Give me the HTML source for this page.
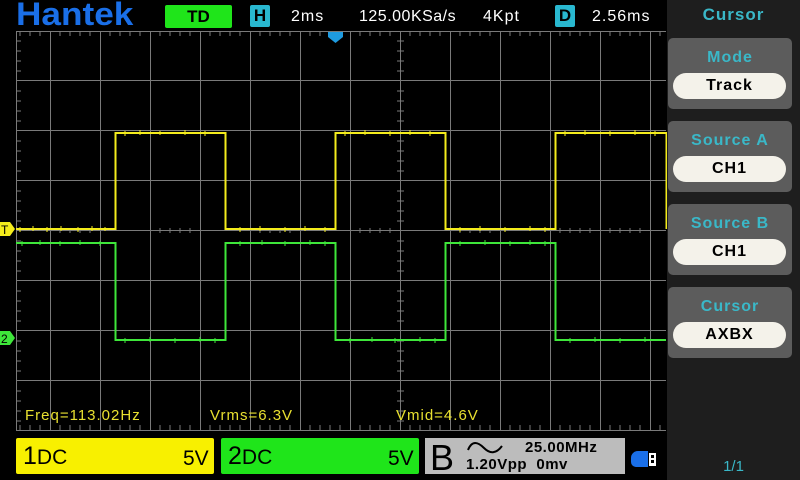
<!DOCTYPE html>
<html><head><meta charset="utf-8"><style>
body{margin:0;width:800px;height:480px;background:#000;overflow:hidden;font-family:"Liberation Sans",sans-serif}
</style></head><body>
<svg width="800" height="480" xmlns="http://www.w3.org/2000/svg" style="position:absolute;left:0;top:0">
<rect width="800" height="480" fill="#000"/>
<g stroke="#7a7a7a" stroke-width="1">
<line x1="16" y1="31.5" x2="666" y2="31.5"/><line x1="16" y1="430.5" x2="666" y2="430.5"/>
<line x1="16.5" y1="31" x2="16.5" y2="430"/>
<line x1="50.5" y1="31" x2="50.5" y2="430"/><line x1="100.5" y1="31" x2="100.5" y2="430"/><line x1="150.5" y1="31" x2="150.5" y2="430"/><line x1="200.5" y1="31" x2="200.5" y2="430"/><line x1="250.5" y1="31" x2="250.5" y2="430"/><line x1="300.5" y1="31" x2="300.5" y2="430"/><line x1="350.5" y1="31" x2="350.5" y2="430"/><line x1="400.5" y1="31" x2="400.5" y2="430"/><line x1="450.5" y1="31" x2="450.5" y2="430"/><line x1="500.5" y1="31" x2="500.5" y2="430"/><line x1="550.5" y1="31" x2="550.5" y2="430"/><line x1="600.5" y1="31" x2="600.5" y2="430"/><line x1="650.5" y1="31" x2="650.5" y2="430"/>
<line x1="16" y1="80.5" x2="666" y2="80.5"/><line x1="16" y1="130.5" x2="666" y2="130.5"/><line x1="16" y1="180.5" x2="666" y2="180.5"/><line x1="16" y1="230.5" x2="666" y2="230.5"/><line x1="16" y1="280.5" x2="666" y2="280.5"/><line x1="16" y1="330.5" x2="666" y2="330.5"/><line x1="16" y1="380.5" x2="666" y2="380.5"/>
</g>
<g stroke="#7a7a7a" stroke-width="1">
<path d="M20 31v5M30 31v5M40 31v5M60 31v5M70 31v5M80 31v5M90 31v5M110 31v5M120 31v5M130 31v5M140 31v5M160 31v5M170 31v5M180 31v5M190 31v5M210 31v5M220 31v5M230 31v5M240 31v5M260 31v5M270 31v5M280 31v5M290 31v5M310 31v5M320 31v5M330 31v5M340 31v5M360 31v5M370 31v5M380 31v5M390 31v5M410 31v5M420 31v5M430 31v5M440 31v5M460 31v5M470 31v5M480 31v5M490 31v5M510 31v5M520 31v5M530 31v5M540 31v5M560 31v5M570 31v5M580 31v5M590 31v5M610 31v5M620 31v5M630 31v5M640 31v5M660 31v5"/>
<path d="M20 430v-5M30 430v-5M40 430v-5M60 430v-5M70 430v-5M80 430v-5M90 430v-5M110 430v-5M120 430v-5M130 430v-5M140 430v-5M160 430v-5M170 430v-5M180 430v-5M190 430v-5M210 430v-5M220 430v-5M230 430v-5M240 430v-5M260 430v-5M270 430v-5M280 430v-5M290 430v-5M310 430v-5M320 430v-5M330 430v-5M340 430v-5M360 430v-5M370 430v-5M380 430v-5M390 430v-5M410 430v-5M420 430v-5M430 430v-5M440 430v-5M460 430v-5M470 430v-5M480 430v-5M490 430v-5M510 430v-5M520 430v-5M530 430v-5M540 430v-5M560 430v-5M570 430v-5M580 430v-5M590 430v-5M610 430v-5M620 430v-5M630 430v-5M640 430v-5M660 430v-5"/>
<path d="M60 228v5M70 228v5M80 228v5M90 228v5M160 228v5M170 228v5M180 228v5M190 228v5M260 228v5M270 228v5M280 228v5M290 228v5M360 228v5M370 228v5M380 228v5M390 228v5M460 228v5M470 228v5M480 228v5M490 228v5M560 228v5M570 228v5M580 228v5M590 228v5M610 228v5M620 228v5M630 228v5M640 228v5"/>
<path d="M16 41h5M16 51h5M16 61h5M16 71h5M16 91h5M16 101h5M16 111h5M16 121h5M16 141h5M16 151h5M16 161h5M16 171h5M16 191h5M16 201h5M16 211h5M16 221h5M16 241h5M16 251h5M16 261h5M16 271h5M16 291h5M16 301h5M16 311h5M16 321h5M16 341h5M16 351h5M16 361h5M16 371h5M16 391h5M16 401h5M16 411h5M16 421h5"/>
<path d="M397 41h7M397 51h7M397 61h7M397 71h7M397 91h7M397 101h7M397 111h7M397 121h7M397 141h7M397 151h7M397 161h7M397 171h7M397 191h7M397 201h7M397 211h7M397 221h7M397 241h7M397 251h7M397 261h7M397 271h7M397 291h7M397 301h7M397 311h7M397 321h7M397 341h7M397 351h7M397 361h7M397 371h7M397 391h7M397 401h7M397 411h7M397 421h7"/>
</g>
<path d="M16 229H115.5V133H225.5V229H335.5V133H445.5V229H555.5V133H666.5V229" fill="none" stroke="#f4ec1c" stroke-width="2"/>
<path d="M16 243H115.5V340H225.5V243H335.5V340H445.5V243H555.5V340H666" fill="none" stroke="#3ee63a" stroke-width="2"/>
<g stroke="#f4ec1c" stroke-width="1"><path d="M20 227v5M33 226v5M47 227v5M61 226v5M78 227v5M92 226v5M105 227v4M125 131v5M140 130v5M160 131v4M185 130v5M205 131v5M240 227v5M260 226v5M285 227v5M305 226v5M325 227v5M345 131v5M365 130v5M390 131v5M410 130v5M430 131v5M460 227v5M480 226v5M505 227v5M530 226v5M545 227v5M565 131v5M585 130v5M610 131v5M635 130v5M655 131v5"/></g>
<g stroke="#3ee63a" stroke-width="1"><path d="M22 241v5M40 240v5M60 241v5M80 240v5M100 241v5M125 338v5M150 337v5M175 338v5M200 337v5M215 338v5M240 241v5M262 240v5M285 241v5M310 240v5M325 241v5M350 338v5M372 337v5M395 338v5M420 337v5M435 338v5M460 241v5M485 240v5M510 241v5M530 240v5M545 241v5M570 338v5M595 337v5M620 338v5M645 337v5"/></g>
<path d="M0 222H10L15 229L10 236H0Z" fill="#f4ec1c"/><text x="1" y="234" font-size="12" fill="#000" font-family="Liberation Sans">T</text>
<path d="M0 331H10L15 338L10 345H0Z" fill="#3ee63a"/><text x="1" y="343" font-size="12" fill="#000" font-family="Liberation Sans">2</text>
<path d="M328 32H343V37L335.5 43L328 37Z" fill="#1e9be0"/>
</svg>
<div style="position:absolute;left:16px;top:-4px;font-size:32px;font-weight:bold;color:#1a6fe8;letter-spacing:0px;transform:scaleX(1.1);transform-origin:left">Hantek</div>
<div style="position:absolute;left:165px;top:5px;width:67px;height:23px;background:#1fe51a;border-radius:2px;color:#000;font-size:17px;font-weight:bold;text-align:center;line-height:23px">TD</div>
<div style="position:absolute;left:250px;top:5px;width:20px;height:22px;background:#29b8d0;border-radius:2px;color:#000;font-size:17px;font-weight:bold;text-align:center;line-height:22px">H</div>
<div style="position:absolute;left:291px;top:8px;color:#fff;font-size:16px;letter-spacing:1px">2ms</div>
<div style="position:absolute;left:359px;top:8px;color:#fff;font-size:16px;letter-spacing:0.5px">125.00KSa/s</div>
<div style="position:absolute;left:483px;top:8px;color:#fff;font-size:16px;letter-spacing:1px">4Kpt</div>
<div style="position:absolute;left:555px;top:5px;width:20px;height:22px;background:#29b8d0;border-radius:2px;color:#000;font-size:17px;font-weight:bold;text-align:center;line-height:22px">D</div>
<div style="position:absolute;left:592px;top:8px;color:#fff;font-size:16px;letter-spacing:1px">2.56ms</div>
<div style="position:absolute;left:25px;top:407px;color:#e8e030;font-size:15px;letter-spacing:1px">Freq=113.02Hz</div>
<div style="position:absolute;left:210px;top:407px;color:#e8e030;font-size:15px;letter-spacing:1px">Vrms=6.3V</div>
<div style="position:absolute;left:396px;top:407px;color:#e8e030;font-size:15px;letter-spacing:1px">Vmid=4.6V</div>
<div style="position:absolute;left:16px;top:438px;width:198px;height:36px;background:#f8f000;border-radius:2px"></div>
<div style="position:absolute;left:23px;top:442px;font-size:25px;color:#000">1<span style="font-size:21px">DC</span></div>
<div style="position:absolute;left:183px;top:447px;font-size:21px;color:#000">5V</div>
<div style="position:absolute;left:221px;top:438px;width:198px;height:36px;background:#1fe51a;border-radius:2px"></div>
<div style="position:absolute;left:228px;top:442px;font-size:25px;color:#000">2<span style="font-size:21px">DC</span></div>
<div style="position:absolute;left:388px;top:447px;font-size:21px;color:#000">5V</div>
<div style="position:absolute;left:425px;top:438px;width:200px;height:36px;background:#bcbcbc"></div>
<div style="position:absolute;left:430px;top:437px;font-size:36px;color:#000">B</div>
<svg style="position:absolute;left:466px;top:440px" width="40" height="16"><path d="M2 10C6 0 12 2 18 8C24 14 30 14 36 6" fill="none" stroke="#000" stroke-width="2"/></svg>
<div style="position:absolute;left:525px;top:439px;font-size:15px;font-weight:bold;color:#000;letter-spacing:0.5px">25.00MHz</div>
<div style="position:absolute;left:466px;top:456px;font-size:15px;font-weight:bold;color:#000;letter-spacing:0.5px">1.20Vpp&nbsp;&nbsp;0mv</div>
<svg style="position:absolute;left:630px;top:449px" width="30" height="22"><path d="M8 2H18V18H6A5 5 0 0 1 1 13V9A7 7 0 0 1 8 2Z" fill="#1a6fe8"/><rect x="19" y="4" width="7" height="13" fill="#fff"/><rect x="21" y="6" width="3" height="3" fill="#000"/><rect x="21" y="11" width="3" height="3" fill="#000"/></svg>
<div style="position:absolute;left:667px;top:0;width:133px;height:480px;background:#1e1e1e"></div>
<div style="position:absolute;left:667px;top:5px;width:133px;text-align:center;color:#3ab8c8;font-size:17px;font-weight:bold;letter-spacing:1px">Cursor</div>
<div style="position:absolute;left:668px;top:38px;width:124px;height:71px;background:#5c5c5c;border-radius:5px"></div>
<div style="position:absolute;left:668px;top:49px;width:124px;text-align:center;color:#3ab8c8;font-size:16px;font-weight:bold;letter-spacing:1px">Mode</div>
<div style="position:absolute;left:673px;top:73px;width:113px;height:26px;background:#f4f2ea;border-radius:13px;text-align:center;line-height:26px;font-size:16px;font-weight:bold;color:#000;letter-spacing:1px">Track</div>
<div style="position:absolute;left:668px;top:121px;width:124px;height:71px;background:#5c5c5c;border-radius:5px"></div>
<div style="position:absolute;left:668px;top:132px;width:124px;text-align:center;color:#3ab8c8;font-size:16px;font-weight:bold;letter-spacing:1px">Source A</div>
<div style="position:absolute;left:673px;top:156px;width:113px;height:26px;background:#f4f2ea;border-radius:13px;text-align:center;line-height:26px;font-size:16px;font-weight:bold;color:#000;letter-spacing:1px">CH1</div>
<div style="position:absolute;left:668px;top:204px;width:124px;height:71px;background:#5c5c5c;border-radius:5px"></div>
<div style="position:absolute;left:668px;top:215px;width:124px;text-align:center;color:#3ab8c8;font-size:16px;font-weight:bold;letter-spacing:1px">Source B</div>
<div style="position:absolute;left:673px;top:239px;width:113px;height:26px;background:#f4f2ea;border-radius:13px;text-align:center;line-height:26px;font-size:16px;font-weight:bold;color:#000;letter-spacing:1px">CH1</div>
<div style="position:absolute;left:668px;top:287px;width:124px;height:71px;background:#5c5c5c;border-radius:5px"></div>
<div style="position:absolute;left:668px;top:298px;width:124px;text-align:center;color:#3ab8c8;font-size:16px;font-weight:bold;letter-spacing:1px">Cursor</div>
<div style="position:absolute;left:673px;top:322px;width:113px;height:26px;background:#f4f2ea;border-radius:13px;text-align:center;line-height:26px;font-size:16px;font-weight:bold;color:#000;letter-spacing:1px">AXBX</div>
<div style="position:absolute;left:667px;top:458px;width:133px;text-align:center;color:#3ab8c8;font-size:15px">1/1</div>
</body></html>
